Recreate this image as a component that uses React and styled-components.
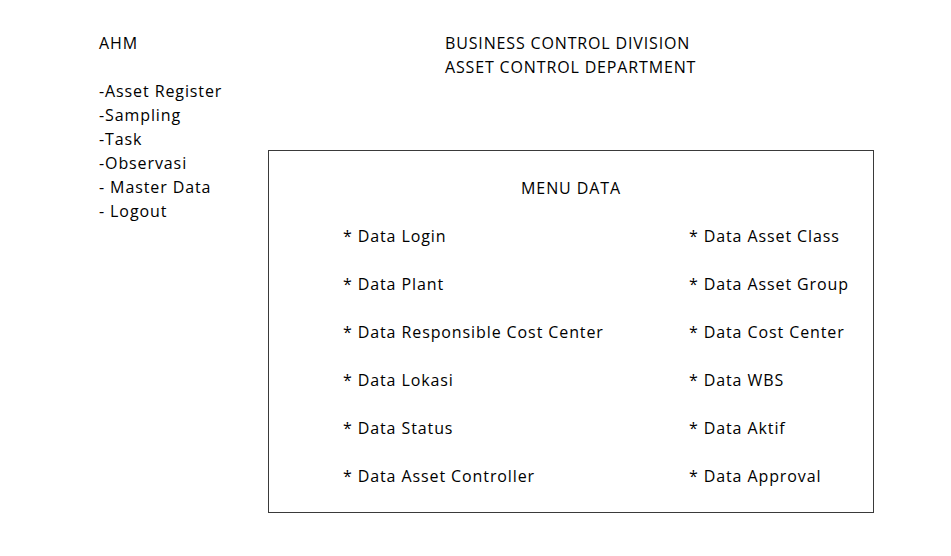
import React from "react";
import styled, { createGlobalStyle } from "styled-components";

const Global = createGlobalStyle`
  html, body { margin: 0; padding: 0; background: #fff; }
  body { font-family: "Open Sans", "Noto Sans", sans-serif; color: #000; }
`;

const Page = styled.div`
  display: grid;
  grid-template-columns: 169px 606px;
  padding: 31px 0 0 99px;
  font-size: 16px;
  font-weight: 500;
  letter-spacing: 0.9px;
  line-height: 24px;
`;

const Sidebar = styled.nav`
  display: flex;
  flex-direction: column;
`;

const Brand = styled.div`
  margin-bottom: 24px;
`;

const NavItem = styled.div`
  white-space: nowrap;
`;

const Main = styled.main`
  display: flex;
  flex-direction: column;
`;

const Header = styled.header`
  margin-left: 177px;
  display: flex;
  flex-direction: column;
  white-space: nowrap;
  letter-spacing: 0.85px;
`;

const MenuBox = styled.section`
  margin-top: 71px;
  height: 363px;
  box-sizing: border-box;
  border: 1px solid #3a3a3a;
  padding: 13px 0 0 0;
  display: grid;
  grid-template-columns: 420px 1fr;
  grid-auto-rows: 48px;
`;

const TitleRow = styled.div`
  grid-column: 1 / -1;
  display: flex;
  align-items: center;
  justify-content: center;
`;

const Item = styled.div`
  display: flex;
  align-items: center;
  padding-left: ${(p) => (p.$right ? 0 : 74)}px;
  white-space: nowrap;
`;

const Star = styled.span`
  margin-right: 5px;
`;

const left = [
  "Data Login",
  "Data Plant",
  "Data Responsible Cost Center",
  "Data Lokasi",
  "Data Status",
  "Data Asset Controller",
];
const right = [
  "Data Asset Class",
  "Data Asset Group",
  "Data Cost Center",
  "Data WBS",
  "Data Aktif",
  "Data Approval",
];

export default function App() {
  return (
    <>
      <Global />
      <Page>
        <Sidebar>
          <Brand>AHM</Brand>
          <NavItem>-Asset Register</NavItem>
          <NavItem>-Sampling</NavItem>
          <NavItem>-Task</NavItem>
          <NavItem>-Observasi</NavItem>
          <NavItem>- Master Data</NavItem>
          <NavItem>- Logout</NavItem>
        </Sidebar>
        <Main>
          <Header>
            <div>BUSINESS CONTROL DIVISION</div>
            <div>ASSET CONTROL DEPARTMENT</div>
          </Header>
          <MenuBox>
            <TitleRow>MENU DATA</TitleRow>
            {left.map((l, i) => (
              <React.Fragment key={l}>
                <Item>
                  <Star>*</Star>
                  {l}
                </Item>
                <Item $right>
                  <Star>*</Star>
                  {right[i]}
                </Item>
              </React.Fragment>
            ))}
          </MenuBox>
        </Main>
      </Page>
    </>
  );
}
